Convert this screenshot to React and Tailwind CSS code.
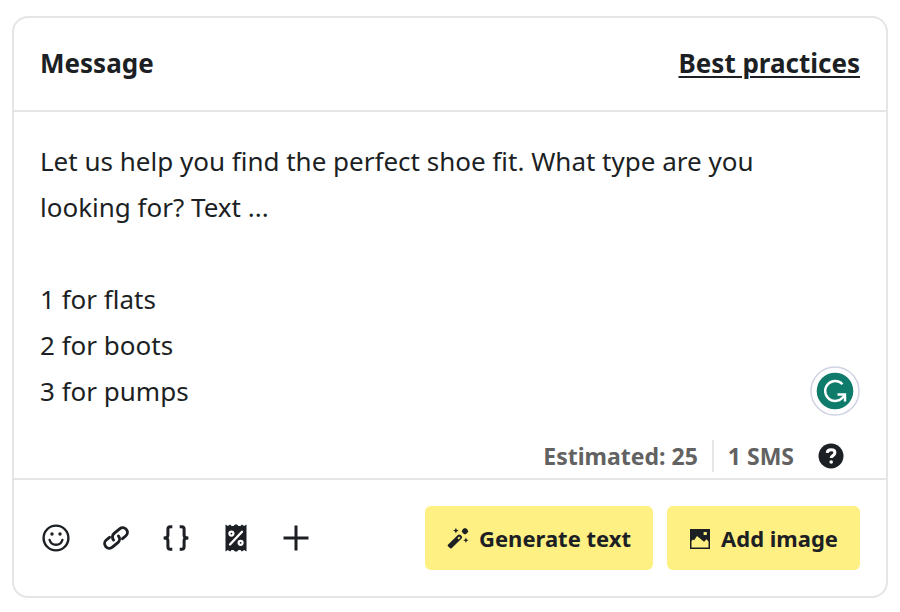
import React from "react";

function SmileIcon() {
  return (
    <svg viewBox="0 0 28 28" className="size-7" fill="none" stroke="currentColor" strokeWidth="2.4" strokeLinecap="round" aria-hidden="true">
      <circle cx="14" cy="14" r="12.4" />
      <path d="M7.6 16c1 3.1 3.4 4.7 6.4 4.7s5.4-1.6 6.4-4.7" />
      <circle cx="10" cy="10" r="1.7" fill="currentColor" stroke="none" />
      <circle cx="18" cy="10" r="1.7" fill="currentColor" stroke="none" />
    </svg>
  );
}

function LinkIcon() {
  return (
    <svg viewBox="0 0 28 28" className="size-7" fill="none" stroke="currentColor" strokeWidth="2.9" strokeLinecap="round" aria-hidden="true">
      <g transform="rotate(-40 14 14)">
        <path d="M9.5 9.3H5.3a4.7 4.7 0 0 0 0 9.4h7.2a4.7 4.7 0 0 0 4.7-4.7" />
        <path d="M18.5 18.7h4.2a4.7 4.7 0 0 0 0-9.4h-7.2a4.7 4.7 0 0 0-4.7 4.7" />
      </g>
    </svg>
  );
}

function BracesIcon() {
  return (
    <svg viewBox="0 0 28 28" className="size-7" fill="none" stroke="currentColor" strokeWidth="3" aria-hidden="true">
      <path d="M10.3 2.8H8.3q-2.4 0-2.4 2.4v6.3q0 2.5-4.3 2.5 4.3 0 4.3 2.5v6.3q0 2.4 2.4 2.4h2" />
      <path d="M17.7 2.8h2q2.4 0 2.4 2.4v6.3q0 2.5 4.3 2.5-4.3 0-4.3 2.5v6.3q0 2.4-2.4 2.4h-2" />
    </svg>
  );
}

function CouponIcon() {
  return (
    <svg viewBox="0 0 28 28" className="size-7" fill="none" aria-hidden="true">
      <path fill="currentColor" d="M3.5 0.5L5.8 2 8.2 0.5 9.5 2H11.5L13 0.5h2L16.5 2h2L19.8 0.5 22.2 2l2.3-1.5v27L22.2 26l-2.4 1.5L18.5 26h-2L15 27.5h-2L11.5 26h-2L8.2 27.5 5.8 26l-2.3 1.5z" />
      <path d="M8 20.5L20 7.8" stroke="white" strokeWidth="2.4" strokeLinecap="round" />
      <circle cx="9.4" cy="9.6" r="2" stroke="white" strokeWidth="2.2" />
      <circle cx="18.6" cy="18.8" r="2" stroke="white" strokeWidth="2.2" />
    </svg>
  );
}

function PlusIcon() {
  return (
    <svg viewBox="0 0 28 28" className="size-7" stroke="currentColor" strokeWidth="3" aria-hidden="true">
      <path d="M14 1.5v25M1.5 14h25" />
    </svg>
  );
}

function WandIcon() {
  return (
    <svg viewBox="0 0 22 22" className="size-[22px] shrink-0" fill="currentColor" aria-hidden="true">
      <path fillRule="evenodd" d="M0.9 17.8L10.9 8q1.4-1.2 2.7 0l1 1q1.2 1.3 0 2.6L4.6 21.3q-0.7 0.5-1.3 0L0.9 19.2q-0.6-0.7 0-1.4zM10.4 11.2l1.3 1.3 1.7-1.7-1.2-1.3z" />
      <path d="M8.9 0.8l0.8 2 2 0.8-2 0.8-0.8 2-0.8-2-2-0.8 2-0.8zM18.9 10.6l0.8 1.9 1.9 0.8-1.9 0.8-0.8 1.9-0.8-1.9-1.9-0.8 1.9-0.8z" />
      <path d="M18 1l2.1 1.1 1 2.1-1 2.1-2.1 1.1-2.1-1.1-1-2.1 1-2.1z" />
    </svg>
  );
}

function ImageIcon() {
  return (
    <svg viewBox="0 0 22 22" className="size-[22px] shrink-0" aria-hidden="true">
      <path fill="currentColor" fillRule="evenodd" d="M1 2h20v20H1zM2.5 14v6.5h17V14.5l-2-2.200-2.500 2.500L8 9 5.200 13.300l-1.300-0.800zM14.600 5v3h3.200V5z" />
    </svg>
  );
}

function HelpIcon() {
  return (
    <svg viewBox="0 0 26 26" className="size-[26px]" fill="none" aria-hidden="true">
      <circle cx="13" cy="13" r="12.5" fill="currentColor" />
      <path d="M9.2 9.8c0.200-2 1.700-3 3.900-3 2.300 0 3.800 1.100 3.800 2.900 0 2.800-3.700 2.600-3.700 5.400" stroke="white" strokeWidth="3" />
      <circle cx="13.2" cy="19" r="1.8" fill="white" />
    </svg>
  );
}

function WritingAssistantIcon() {
  return (
    <svg viewBox="0 0 50 50" className="size-[50px]" fill="none" aria-hidden="true">
      <circle cx="25" cy="25" r="24" fill="white" stroke="#cfd3e2" strokeWidth="1.5" />
      <circle cx="25" cy="25" r="18.3" fill="#0f7b6b" />
      <path d="M32.5 18.2A10 10 0 1 0 32.5 31.8L34.5 29.5" stroke="white" strokeWidth="2.4" />
      <path d="M27.5 28.5h7.5v7" stroke="white" strokeWidth="2.4" />
    </svg>
  );
}

const tools = [
  { label: "Insert emoji", Icon: SmileIcon },
  { label: "Insert link", Icon: LinkIcon },
  { label: "Insert variable", Icon: BracesIcon },
  { label: "Insert coupon", Icon: CouponIcon },
  { label: "More options", Icon: PlusIcon },
];

const draft = `Let us help you find the perfect shoe fit. What type are you looking for? Text ...

1 for flats
2 for boots
3 for pumps`;

export default function App() {
  return (
    <main className="bg-white px-3 pt-4 pb-3 font-['Noto_Sans',sans-serif] text-[#1c1f23]">
      <section className="rounded-2xl border-2 border-[#e5e5e5]">
        <header className="flex items-center justify-between border-b-2 border-[#e5e5e5] px-[26px] pt-[27px] pb-[29px]">
          <label htmlFor="message" className="text-[26px] leading-9 font-bold">Message</label>
          <a href="#best-practices" className="text-[26px] leading-9 font-bold underline decoration-2 underline-offset-3">Best practices</a>
        </header>

        <div className="relative pt-[26px]">
          <textarea
            id="message"
            rows={6}
            spellCheck={false}
            defaultValue={draft}
            className="block w-full resize-none overflow-hidden pr-16 pl-[26px] text-[26px] leading-[46px] outline-none"
          />
          <button type="button" aria-label="Writing suggestions" className="absolute right-[26px] bottom-[62px]">
            <WritingAssistantIcon />
          </button>
          <div className="flex items-center justify-end pt-[26px] pr-[42px] pb-1.5 text-[23px] leading-8 font-bold text-[#626262]">
            <span className="border-r-2 border-[#e5e5e5] pr-3.5">Estimated: 25</span>
            <span className="pl-3.5">1 SMS</span>
            <button type="button" aria-label="About message length" className="ml-6 text-[#1c1f23]">
              <HelpIcon />
            </button>
          </div>
        </div>

        <footer className="flex items-center justify-between border-t-2 border-[#e5e5e5] px-[26px] py-[26px]">
          <div className="flex items-center gap-8 pl-0.5">
            {tools.map(({ label, Icon }) => (
              <button key={label} type="button" aria-label={label}>
                <Icon />
              </button>
            ))}
          </div>
          <div className="flex gap-3.5 text-[22px] font-bold">
            <button type="button" className="flex h-16 items-center gap-2.5 rounded-md bg-[#fff083] px-[22px]">
              <WandIcon />
              Generate text
            </button>
            <button type="button" className="flex h-16 items-center gap-2.5 rounded-md bg-[#fff083] px-[22px]">
              <ImageIcon />
              Add image
            </button>
          </div>
        </footer>
      </section>
    </main>
  );
}
